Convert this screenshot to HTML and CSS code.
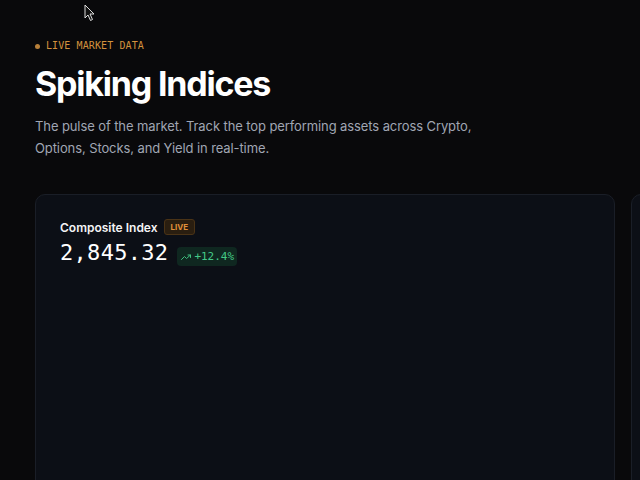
FILE: index.html
```html
<!DOCTYPE html>
<html lang="en">
<head>
<meta charset="utf-8">
<title>Spiking Indices</title>
<link rel="stylesheet" href="styles.css">
</head>
<body>
<svg class="cursor" width="12" height="18" viewBox="0 0 12 18"><path d="M1 1 L1 14 L4 11 L6.5 16.5 L8.5 15.5 L6 10 L10 10 Z" fill="#111" stroke="#ddd" stroke-width="1"/></svg>
<main class="page">
  <header class="hero">
    <div class="eyebrow"><span class="dot"></span>LIVE MARKET DATA</div>
    <h1 class="title">Spiking Indices</h1>
    <p class="lead">The pulse of the market. Track the top performing assets across Crypto, Options, Stocks, and Yield in real-time.</p>
  </header>
  <section class="cards">
    <article class="card">
      <div class="card-head">
        <span class="card-name">Composite Index</span>
        <span class="live">LIVE</span>
      </div>
      <div class="card-value">
        <span class="value">2,845.32</span>
        <span class="change">
          <svg width="11" height="8" viewBox="0 0 11 8"><path d="M0.5 6.5 L3.5 3.5 L5.5 5.5 L9.5 2 M7 2 H9.5 V4.5" fill="none" stroke="#3fbf7f" stroke-width="1" stroke-linecap="round" stroke-linejoin="round"/></svg>
          +12.4%
        </span>
      </div>
    </article>
    <article class="card"></article>
  </section>
</main>
</body>
</html>
```

FILE: styles.css
```css
html, body {
  margin: 0;
  padding: 0;
  background: #09090b;
  height: 100%;
  overflow: hidden;
}
body {
  font-family: Inter, "Noto Sans", sans-serif;
  color: #f4f4f5;
}
.cursor {
  position: absolute;
  left: 84px;
  top: 4px;
}
.page {
  padding: 37px 0 0 35px;
}
.eyebrow {
  display: flex;
  align-items: center;
  gap: 6px;
  font-family: "DejaVu Sans Mono", monospace;
  font-size: 10px;
  line-height: 18px;
  letter-spacing: 0.1px;
  color: #d3913d;
}
.dot {
  width: 5px;
  height: 5px;
  border-radius: 50%;
  background: #b8803a;
}
.title {
  margin: 9px 0 0;
  font-size: 34px;
  line-height: 40px;
  font-weight: 700;
  letter-spacing: -1.2px;
  color: #ffffff;
}
.lead {
  margin: 11px 0 0;
  max-width: 480px;
  font-size: 13px;
  line-height: 22px;
  letter-spacing: -0.1px;
  color: #a0a6b3;
}
.cards {
  display: flex;
  gap: 16px;
  margin-top: 35px;
}
.card {
  flex: 0 0 580px;
  box-sizing: border-box;
  height: 420px;
  padding: 24px;
  background: #0c0f16;
  border: 1px solid #1a1e27;
  border-radius: 10px;
}
.card-head {
  display: flex;
  align-items: center;
  gap: 6px;
}
.card-name {
  font-size: 12px;
  font-weight: 600;
  color: #f4f4f5;
}
.live {
  font-size: 8px;
  font-weight: 700;
  line-height: 14px;
  padding: 0 6px;
  border-radius: 3px;
  background: #2a1e10;
  border: 1px solid #4a3316;
  color: #e0903a;
}
.card-value {
  display: flex;
  align-items: center;
  gap: 9px;
  margin-top: 4px;
}
.value {
  font-family: "DejaVu Sans Mono", monospace;
  font-size: 22px;
  line-height: 28px;
  letter-spacing: 0.3px;
  color: #ffffff;
}
.change {
  display: flex;
  align-items: center;
  gap: 2px;
  margin-top: 7px;
  height: 19px;
  padding: 0 3px 0 4px;
  border-radius: 4px;
  background: #0f2720;
  font-family: "DejaVu Sans Mono", monospace;
  font-size: 11px;
  color: #44c987;
}
```
